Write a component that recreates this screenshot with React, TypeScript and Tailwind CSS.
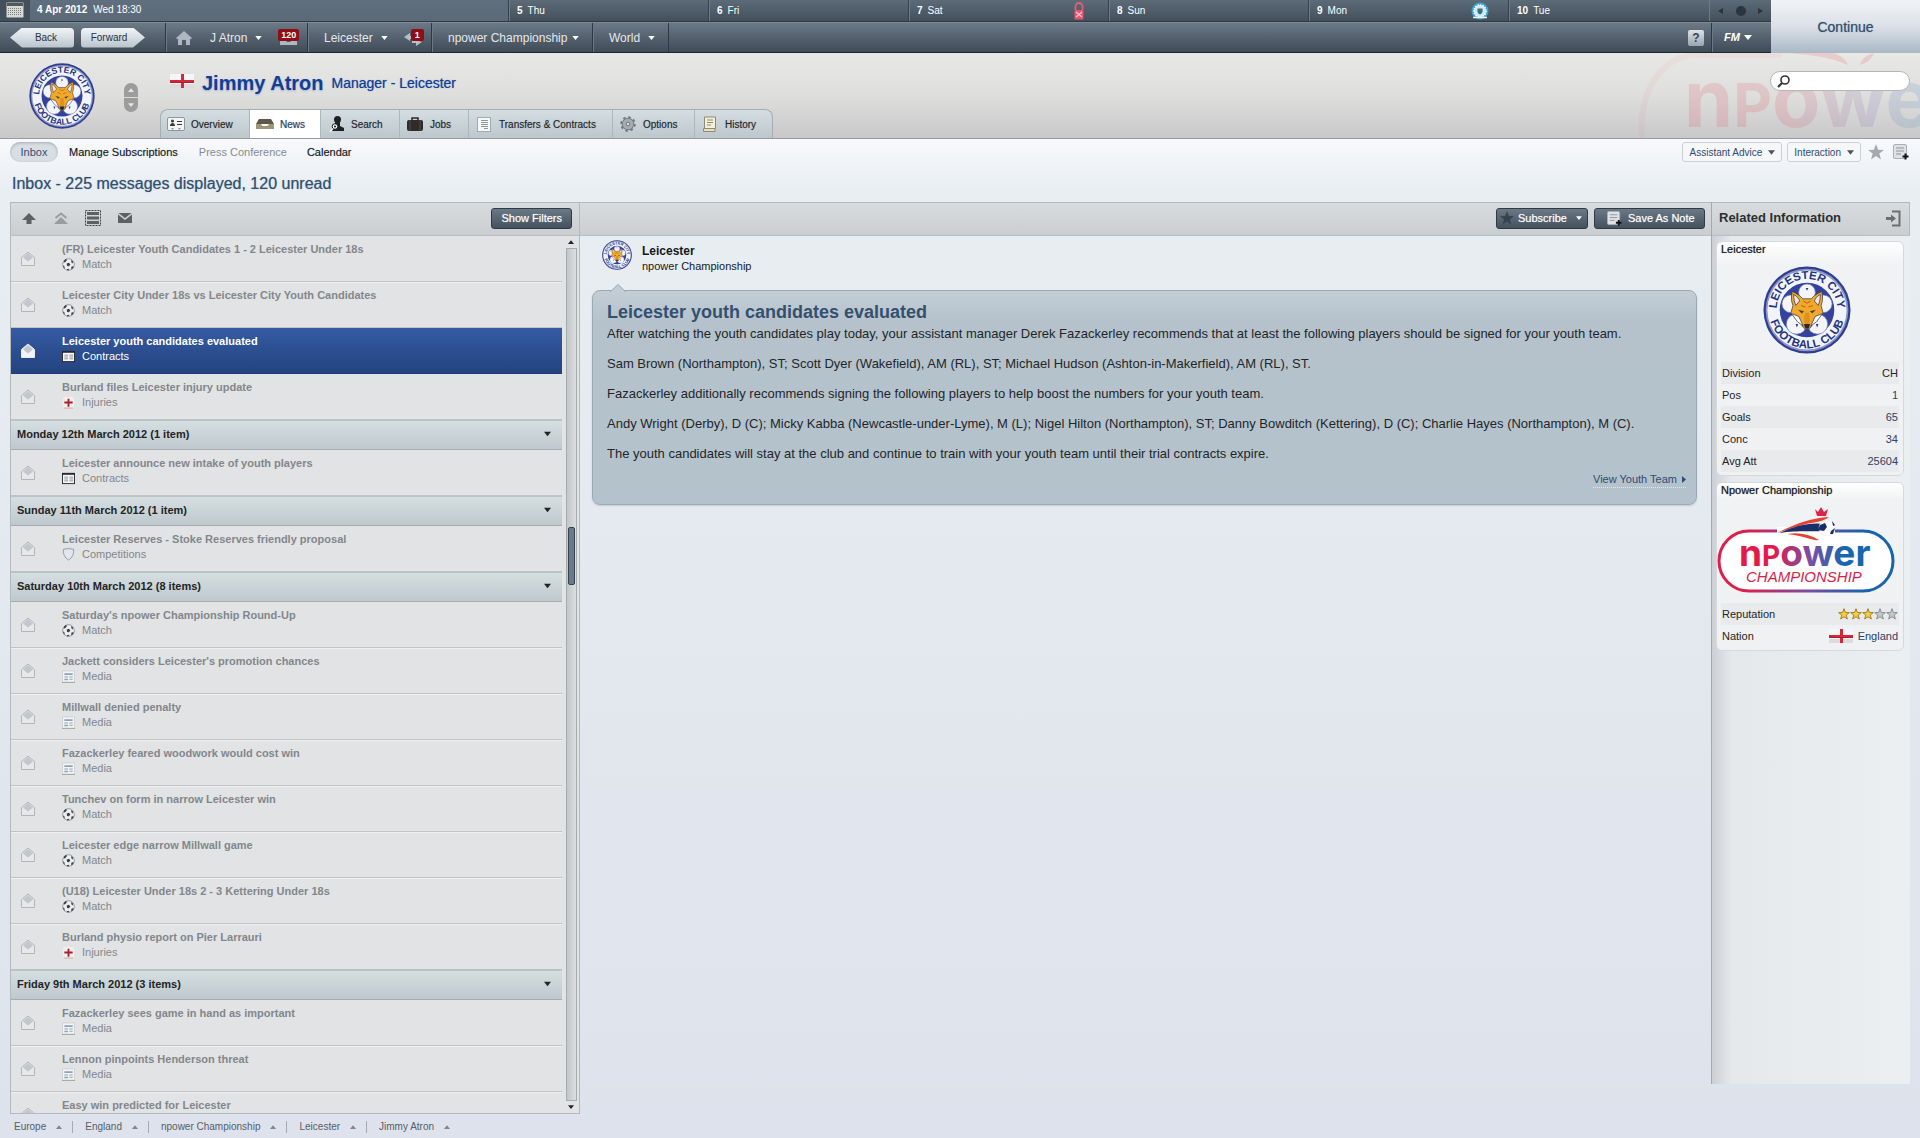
import React from "react";
import clsx from "clsx";

type Category = "Match" | "Contracts" | "Injuries" | "Competitions" | "Media";

interface Message {
  title: string;
  category: Category;
  selected?: boolean;
}

interface Group {
  heading?: string;
  messages: Message[];
}

const groups: Group[] = [
  {
    messages: [
      { title: "(FR) Leicester Youth Candidates 1 - 2 Leicester Under 18s", category: "Match" },
      { title: "Leicester City Under 18s vs Leicester City Youth Candidates", category: "Match" },
      { title: "Leicester youth candidates evaluated", category: "Contracts", selected: true },
      { title: "Burland files Leicester injury update", category: "Injuries" },
    ],
  },
  {
    heading: "Monday 12th March 2012 (1 item)",
    messages: [{ title: "Leicester announce new intake of youth players", category: "Contracts" }],
  },
  {
    heading: "Sunday 11th March 2012 (1 item)",
    messages: [{ title: "Leicester Reserves - Stoke Reserves friendly proposal", category: "Competitions" }],
  },
  {
    heading: "Saturday 10th March 2012 (8 items)",
    messages: [
      { title: "Saturday's npower Championship Round-Up", category: "Match" },
      { title: "Jackett considers Leicester's promotion chances", category: "Media" },
      { title: "Millwall denied penalty", category: "Media" },
      { title: "Fazackerley feared woodwork would cost win", category: "Media" },
      { title: "Tunchev on form in narrow Leicester win", category: "Match" },
      { title: "Leicester edge narrow Millwall game", category: "Match" },
      { title: "(U18) Leicester Under 18s 2 - 3 Kettering Under 18s", category: "Match" },
      { title: "Burland physio report on Pier Larrauri", category: "Injuries" },
    ],
  },
  {
    heading: "Friday 9th March 2012 (3 items)",
    messages: [
      { title: "Fazackerley sees game in hand as important", category: "Media" },
      { title: "Lennon pinpoints Henderson threat", category: "Media" },
      { title: "Easy win predicted for Leicester", category: "Media" },
    ],
  },
];

const body = [
  "After watching the youth candidates play today, your assistant manager Derek Fazackerley recommends that at least the following players should be signed for your youth team.",
  "Sam Brown (Northampton), ST; Scott Dyer (Wakefield), AM (RL), ST; Michael Hudson (Ashton-in-Makerfield), AM (RL), ST.",
  "Fazackerley additionally recommends signing the following players to help boost the numbers for your youth team.",
  "Andy Wright (Derby), D (C); Micky Kabba (Newcastle-under-Lyme), M (L); Nigel Hilton (Northampton), ST; Danny Bowditch (Kettering), D (C); Charlie Hayes (Northampton), M (C).",
  "The youth candidates will stay at the club and continue to train with your youth team until their trial contracts expire.",
];

const Caret = ({ className = "", up = false }: { className?: string; up?: boolean }) => (
  <svg className={clsx("shrink-0", className)} viewBox="0 0 8 5" fill="currentColor" aria-hidden="true">
    <path d={up ? "M0 5h8L4 0z" : "M0 0h8L4 5z"} />
  </svg>
);

const Crest = ({ id, className }: { id: string; className: string }) => (
  <svg className={className} viewBox="0 0 100 100" role="img" aria-label="Leicester City crest">
    <defs>
      <path id={`${id}-top`} d="M16 55A34.500 34.500 0 1 1 84 55" />
      <path id={`${id}-bottom`} d="M6.500 50A43.500 43.500 0 0 0 93.500 50" />
    </defs>
    <circle cx="50" cy="50" r="49.500" fill="#2f3d8f" />
    <circle cx="50" cy="50" r="47" fill="#8c95c8" />
    <circle cx="50" cy="50" r="45" fill="#f2f4fb" />
    <circle cx="50" cy="50" r="31" fill="#33429a" />
    <g fill="#f4f5fb" stroke="#7480ba" strokeWidth="0.8">
      <circle cx="50" cy="30" r="9.500" />
      <circle cx="31.500" cy="43" r="10" />
      <circle cx="68.500" cy="43" r="10" />
      <circle cx="38" cy="66" r="11.500" />
      <circle cx="62" cy="66" r="11.500" />
    </g>
    <path d="M37 66l3 0-1.500 4zM60 66l3 0-1.500 4zM48.500 25h3L50 28z" fill="#2b3a86" />
    <g transform="translate(8 7) scale(0.84)">
      <g stroke="#3a3550" strokeWidth="1" strokeLinejoin="round">
        <path d="M30 26c7 3 11 6 14 10h12c3-4 7-7 14-10 2 9 1 14-1 19l3 11-11 8-6 11-5 3-5-3-6-11-11-8 3-11c-2-5-3-10-1-19z" fill="#f0a92a" />
        <path d="M32 30c5 3 7 6 8 9l-5 6c-2-4-3-9-3-15zM68 30c-5 3-7 6-8 9l5 6c2-4 3-9 3-15z" fill="#efe7e0" />
        <path d="M29 56l10 4 6 13-8-6zM71 56l-10 4-6 13 8-6z" fill="#ffffff" />
      </g>
      <path d="M38 51l8 2-3 3zM62 51l-8 2 3 3z" fill="#4a4038" />
      <path d="M47 55l-1 12 4 8 4-8-1-12" fill="#e18f1e" />
      <path d="M46 70h8l-1 5-3 2-3-2z" fill="#26263a" />
      <path d="M45 39l5 3 5-3M42 45l6 2M58 45l-6 2" fill="none" stroke="#c26a1a" strokeWidth="1.500" />
    </g>
    <g fill="#26357f" fontFamily="Liberation Sans, Arial, sans-serif" fontWeight="700" fontSize="13">
      <text textAnchor="middle">
        <textPath href={`#${id}-top`} startOffset="50%">LEICESTER CITY</textPath>
      </text>
      <text textAnchor="middle">
        <textPath href={`#${id}-bottom`} startOffset="50%">FOOTBALL CLUB</textPath>
      </text>
    </g>
  </svg>
);

const Flag = ({ className }: { className: string }) => (
  <svg className={className} viewBox="0 0 24 14" role="img" aria-label="England">
    <rect width="24" height="14" fill="#f6f6f6" />
    <path d="M0 10h24v4H0z" fill="#dcdcdc" />
    <path d="M11 0h3v14h-3zM0 6h24v3H0z" fill="#d3273a" />
    <path d="M0 8h24v1H0z" fill="#b01c30" />
  </svg>
);

const NoteIcon = ({ className }: { className: string }) => (
  <svg className={className} viewBox="0 0 16 16" aria-hidden="true">
    <rect x="0.500" y="0.500" width="13" height="14" rx="1.500" fill="#dfe2e5" stroke="#a9afb5" />
    <path d="M3 4h8M3 7h8M3 10h5" stroke="#8d949b" />
    <path d="M12.500 9.500v6M9.500 12.500h6" stroke="#111" strokeWidth="2" />
  </svg>
);

const StarIcon = ({ className }: { className: string }) => (
  <svg className={className} viewBox="0 0 16 16" fill="currentColor" aria-hidden="true">
    <path d="M8 0l2.100 5.700 5.900.200-4.700 3.700L13 15.500 8 12.100 3 15.500l1.700-5.900L0 5.900l5.900-.2z" />
  </svg>
);

const Envelope = ({ selected }: { selected?: boolean }) => (
  <svg className="mt-[9px] h-4 w-4 shrink-0" viewBox="0 0 16 16" aria-hidden="true">
    <path d="M1.500 6.500L8 1l6.500 5.500v8h-13z" fill={selected ? "#f3f4f6" : "#e6e8ea"} stroke={selected ? "#e8eaf0" : "#b2b6ba"} />
    <path d="M3 6.500L8 2l5 4.500L8 10.500z" fill="#c3c6cc" />
  </svg>
);

const CategoryIcon = ({ category }: { category: Category }) => {
  switch (category) {
    case "Match":
      return (
        <svg className="h-[13px] w-[13px]" viewBox="0 0 14 14" aria-hidden="true">
          <circle cx="7" cy="7" r="6.300" fill="#eceef0" stroke="#8a8e92" strokeWidth="0.900" />
          <path d="M5 6l2.500-1L9 7 7.500 9 5.500 8.500zM2 3l2-2 1.500 1L4 4 2 5zM10 2l2 2-.5 2L10 4.500zM1 8l1.500.5.500 3L2 11zM10 9.500l2.500-1-.500 2.500-2 1.500zM5 12l2-.500 1 1.500-2 .5z" fill="#3c4044" />
        </svg>
      );
    case "Contracts":
      return (
        <svg className="h-[13px] w-[13px]" viewBox="0 0 14 14" aria-hidden="true">
          <rect x="0.500" y="1.500" width="13" height="11" fill="#f7f7f7" stroke="#26292c" />
          <path d="M0 1h14v2H0z" fill="#26292c" />
          <path d="M2.500 5.500h4M2.500 7.500h4M2.500 9.500h4M8 5.500h4M8 7.500h4M8 9.500h4" stroke="#8b8f93" />
        </svg>
      );
    case "Injuries":
      return (
        <svg className="h-[13px] w-[13px]" viewBox="0 0 14 14" aria-hidden="true">
          <rect x="1" y="1" width="12" height="12" rx="2" fill="#f0efed" />
          <path d="M2 13h10" stroke="#c9a9a0" />
          <path d="M7 3v8.500M2.500 7h9" stroke="#a8202c" strokeWidth="2" />
        </svg>
      );
    case "Competitions":
      return (
        <svg className="h-[13px] w-[13px]" viewBox="0 0 14 14" aria-hidden="true">
          <path d="M1.500 1.500c4-1 7-1 11 0 .5 5-1.500 9-5.500 11.500C3 10.500 1 6.500 1.500 1.500z" fill="#e3e6ee" stroke="#8f959f" />
        </svg>
      );
    case "Media":
      return (
        <svg className="h-[13px] w-[13px]" viewBox="0 0 14 14" aria-hidden="true">
          <rect x="0.500" y="1" width="13" height="12" fill="#f2f4f6" stroke="#ced1d4" />
          <path d="M0 13.500h14" stroke="#a5a49a" />
          <path d="M2.500 3.500h9v2h-9zM2.500 7h4v1h-4zM8 7h3.500v1H8zM2.500 9.500h4v1.500h-4zM8 9.500h3.500v1H8z" fill="#8fa3b8" />
        </svg>
      );
  }
};

const days = [
  { day: "5", name: "Thu" },
  { day: "6", name: "Fri" },
  { day: "7", name: "Sat", icon: "npower" },
  { day: "8", name: "Sun" },
  { day: "9", name: "Mon", icon: "crest" },
  { day: "10", name: "Tue" },
];

const DateBar = () => (
  <div className="flex h-[22px] border-b border-[#2f3942] bg-linear-to-b from-[#5d6b79] to-[#43505c] text-[10px] text-white">
    <div className="flex w-[509px] shrink-0 items-center bg-linear-to-b from-[#5f6f7e] to-[#5c6977] pb-[2px]">
      <button className="flex h-[22px] w-[30px] items-center justify-center bg-[#42505e]" aria-label="Calendar">
        <svg className="h-4 w-[18px]" viewBox="0 0 18 16" aria-hidden="true">
          <rect x="0.500" y="0.500" width="17" height="15" rx="1" fill="#d8d8d4" stroke="#8d9090" />
          <path d="M1 1h16v3H1z" fill="#55585b" />
          <path d="M2 6.500h14M2 8.500h14M2 10.500h14M2 12.500h14" stroke="#7d8083" strokeDasharray="1 1" />
        </svg>
      </button>
      <span className="ml-[7px] font-bold">4 Apr 2012</span>
      <span className="ml-[6px]">Wed 18:30</span>
    </div>
    {days.map((d) => (
      <div key={d.day} className="flex flex-1 items-center border-l border-[#6f7b87] pl-[7px] shadow-[-1px_0_0_#35404a]">
        <span className="font-bold">{d.day}</span>
        <span className="ml-[5px]">{d.name}</span>
        {d.icon === "npower" && (
          <svg className="mr-6 ml-auto h-[18px] w-3" viewBox="0 0 12 18" aria-hidden="true">
            <path d="M2.500 8V4.500a3.500 3.500 0 0 1 7 0V8" fill="none" stroke="#e0607a" strokeWidth="1.800" />
            <rect x="1.500" y="8" width="9" height="9.500" rx="1" fill="#e8546c" />
            <path d="M3 10l6 5M9 10l-6 5" stroke="#f7c3cc" strokeWidth="1.300" />
          </svg>
        )}
        {d.icon === "crest" && (
          <svg className="mr-5 ml-auto h-[18px] w-[18px]" viewBox="0 0 18 18" aria-hidden="true">
            <circle cx="9" cy="9" r="8.500" fill="#3fa3d6" />
            <circle cx="9" cy="9" r="6" fill="#cfeaf7" stroke="#fff" strokeWidth="1.500" strokeDasharray="1.500 1" />
            <path d="M6.500 6.500h5v3c0 1.500-1.500 2.500-2.500 3-1-.5-2.500-1.500-2.500-3z" fill="#3e6f80" />
            <path d="M2 15.500h14" stroke="#e8f5fb" strokeWidth="1.500" />
          </svg>
        )}
      </div>
    ))}
    <div className="flex w-[62px] shrink-0 items-center justify-between border-l border-[#6f7b87] px-2 text-[#2c353d]">
      <button aria-label="Previous day">
        <svg className="h-[6px] w-[5px]" viewBox="0 0 5 6" fill="currentColor"><path d="M5 0v6L0 3z" /></svg>
      </button>
      <span className="h-[10px] w-[10px] rounded-full bg-[#2c353d]" />
      <button aria-label="Next day">
        <svg className="h-[6px] w-[5px]" viewBox="0 0 5 6" fill="currentColor"><path d="M0 0v6l5-3z" /></svg>
      </button>
    </div>
  </div>
);

const navCell = "flex h-full items-center border-l border-[#2e3842] shadow-[inset_1px_0_0_#6b7885]";

const NavBar = () => (
  <div className="flex h-[31px] items-center border-t border-b border-t-[#7d8a96] border-b-[#1f272e] bg-linear-to-b from-[#6c7986] to-[#3f4b57] text-xs text-[#e4e8ec] [text-shadow:0_1px_1px_#2a333b]">
    <div className="flex w-[165px] shrink-0 gap-[7px] pl-[10px] text-[10px] text-[#2b333b] [text-shadow:0_0_1px_#7d868e]">
      <button className="h-5 w-16 rounded-r bg-linear-to-b from-[#f2f5f7] to-[#b9c3cc] pl-2 [clip-path:polygon(0_50%,12px_0,100%_0,100%_100%,12px_100%)]">Back</button>
      <button className="h-5 w-16 rounded-l bg-linear-to-b from-[#f2f5f7] to-[#b9c3cc] pr-2 [clip-path:polygon(0_0,52px_0,100%_50%,52px_100%,0_100%)]">Forward</button>
    </div>
    <div className={clsx(navCell, "w-[142px]")}>
      <button className="ml-[10px]" aria-label="Home">
        <svg className="h-[14px] w-4" viewBox="0 0 16 14" fill="#aeb7bf" aria-hidden="true">
          <path d="M8 0l8 7-1 1.200-1-.8V14h-4V9H6v5H2V7.400l-1 .8L0 7z" />
        </svg>
      </button>
      <button className="ml-[18px] flex items-center gap-[8px]">
        J Atron
        <Caret className="h-1 w-[7px] text-white" />
      </button>
      <button className="ml-4 flex h-[18px] w-[21px] flex-col items-center" aria-label="120 unread messages">
        <span className="z-10 h-3 w-full rounded-[2px] bg-[#8f0d16] text-center text-[9px] leading-3 font-bold text-white [text-shadow:none]">120</span>
        <svg className="-mt-px h-[5px] w-[17px]" viewBox="0 0 17 5" aria-hidden="true">
          <path d="M0 0h5l2 2h3l2-2h5v5H0z" fill="#aeb7bf" />
        </svg>
      </button>
    </div>
    <div className={clsx(navCell, "w-[124px]")}>
      <button className="ml-4 flex items-center gap-[8px]">
        Leicester
        <Caret className="h-1 w-[7px] text-white" />
      </button>
      <button className="relative ml-4 h-[18px] w-5" aria-label="1 transfer notice">
        <svg className="h-[18px] w-5" viewBox="0 0 20 18" fill="#b6bfc7" aria-hidden="true">
          <path d="M0 8l6-4v3h5v3H6v2zM18 13l-6 4v-3H8v-3h4z" />
        </svg>
        <span className="absolute top-0 right-0 h-3 w-[13px] rounded-[2px] bg-[#8f0d16] text-center text-[9px] leading-3 font-bold text-white [text-shadow:none]">1</span>
      </button>
    </div>
    <button className={clsx(navCell, "w-[161px] gap-[5px] pl-4")}>
      npower Championship
      <Caret className="h-1 w-[7px] text-white" />
    </button>
    <button className={clsx(navCell, "w-[76px] gap-[8px] pl-4")}>
      World
      <Caret className="h-1 w-[7px] text-white" />
    </button>
    <div className={navCell} />
    <button className="mr-[7px] ml-auto h-4 w-4 rounded-[2px] bg-linear-to-b from-[#dfe3e7] to-[#98a4af] text-center text-xs leading-4 font-bold text-[#39444f] [text-shadow:none]" aria-label="Help">?</button>
    <button className={clsx(navCell, "w-[60px] gap-1 pl-3 text-[11px] font-bold text-white italic")}>
      FM
      <Caret className="h-[5px] w-2 text-white" />
    </button>
  </div>
);

/* crown and ball trail drawn above the sponsor name */
const Swoosh = () => (
  <g>
    <path d="M60 26C80 16 95 11 112 10c-4 3-8 4-12 5-14 2-26 6-40 11z" fill="#e8412f" />
    <path d="M62 26c16-7 30-11 46-9 4 2 5 4 2 7-14 1-26-1-48 2z" fill="#1a2f68" />
    <path d="M70 27c12-2 22 0 32 6-6 1-14-4-32-6z" fill="#e8412f" />
    <circle cx="110" cy="21" r="8" fill="#fdfdfe" stroke="#dfe3ea" strokeWidth="0.500" />
    <path d="M103 18l5-2 2 4-3 4-6-1zM115 14l3 4-2 1zM114 24l4-3-2 6-3 0z" fill="#1a2f68" />
    <path d="M98 2l3 3 3-5 3 5 4-3-2 7h-9z" fill="#dc2348" />
  </g>
);

const NpowerLogo = () => (
  <svg className="h-[88px] w-[178px]" viewBox="0 0 178 88" role="img" aria-label="npower Championship">
    <defs>
      <linearGradient id="np-ring" x1="0" x2="1">
        <stop offset="0.150" stopColor="#dc1f4b" />
        <stop offset="0.500" stopColor="#7b4aa0" />
        <stop offset="0.850" stopColor="#1763ae" />
      </linearGradient>
      <linearGradient id="np-name" gradientUnits="userSpaceOnUse" x1="22" x2="154" y1="0" y2="0">
        <stop offset="0.250" stopColor="#e41b48" />
        <stop offset="0.550" stopColor="#7550a8" />
        <stop offset="0.800" stopColor="#1767b0" />
      </linearGradient>
    </defs>
    <rect x="2" y="24" width="174" height="60" rx="30" fill="#fff" stroke="url(#np-ring)" strokeWidth="3" />
    <path d="M60 20h58v10H60z" fill="#fff" />
    <Swoosh />
    <text x="22" y="59" fill="url(#np-name)" fontFamily="Inter, sans-serif" fontWeight="700" fontSize="37">
      n<tspan fontSize="28">P</tspan>ower
    </text>
    <text x="29" y="75" fill="#d81f49" fontFamily="Liberation Sans, Arial, sans-serif" fontStyle="italic" fontSize="15">
      CHAMPIONSHIP
    </text>
  </svg>
);

const Watermark = () => (
  <svg className="absolute top-0 right-0 h-[86px] w-[290px] opacity-15" viewBox="0 0 290 86" aria-hidden="true">
    <defs>
      <linearGradient id="wm" gradientUnits="userSpaceOnUse" x1="50" x2="290" y1="0" y2="0">
        <stop offset="0.400" stopColor="#e8364a" />
        <stop offset="0.780" stopColor="#7a6bb0" />
        <stop offset="1" stopColor="#3a83c0" />
      </linearGradient>
    </defs>
    <path d="M12 86C8 40 30 6 62 2h90" fill="none" stroke="#e8364a" strokeWidth="6" opacity="0.300" />
    <path d="M150 0h54c8 3 12 7 14 12-16-7-36-11-68-12zM230 12c2-6 6-10 14-12-2 5-6 10-14 12z" fill="#e83a35" />
    <text x="54" y="74" fill="url(#wm)" fontFamily="Inter, sans-serif" fontWeight="700" fontSize="79">
      n<tspan fontSize="60">P</tspan>ower
    </text>
  </svg>
);

const tabs = [
  {
    label: "Overview",
    width: "w-[88px]",
    icon: (
      <svg className="h-4 w-[18px]" viewBox="0 0 18 16">
        <rect x="0.500" y="1.500" width="17" height="13" rx="1.500" fill="#f3f4f4" stroke="#8f979c" />
        <circle cx="5.500" cy="5" r="1.500" fill="#33383c" />
        <path d="M3 10c0-4 5-4 5 0zM10 5h5v1h-5zM10 8h5v1h-5z" fill="#33383c" />
        <path d="M4 12h3l-1.500 2zM11 12h3l-1.500 2z" fill="#8f979c" />
      </svg>
    ),
  },
  {
    label: "News",
    width: "w-[71px]",
    active: true,
    icon: (
      <svg className="h-[10px] w-[18px]" viewBox="0 0 18 10">
        <path d="M3 0h12l3 5H0z" fill="#5f5748" />
        <path d="M0 5h5l1.500 2h5L13 5h5v5H0z" fill="#a09478" />
      </svg>
    ),
  },
  {
    label: "Search",
    width: "w-[79px]",
    icon: (
      <svg className="h-4 w-[15px]" viewBox="0 0 15 16">
        <circle cx="8.500" cy="3.500" r="3.500" fill="#1e2123" />
        <path d="M6 6h5v4l4 2v3H3v-4l3-1z" fill="#1e2123" />
        <circle cx="6" cy="10.500" r="2.800" fill="#eef0f1" stroke="#1e2123" />
        <circle cx="6" cy="10.500" r="1" fill="#1e2123" />
        <path d="M4 12.500L1 16" stroke="#f4f4f4" strokeWidth="1.500" />
      </svg>
    ),
  },
  {
    label: "Jobs",
    width: "w-[69px]",
    icon: (
      <svg className="h-[14px] w-4" viewBox="0 0 16 14">
        <path d="M5 3V1h6v2" fill="none" stroke="#2a2725" strokeWidth="1.500" />
        <rect y="3" width="16" height="11" rx="2" fill="#2f2b29" />
        <path d="M3 3v11M13 3v11" stroke="#524c48" />
      </svg>
    ),
  },
  {
    label: "Transfers & Contracts",
    width: "w-[144px]",
    icon: (
      <svg className="h-[15px] w-[14px]" viewBox="0 0 14 15">
        <rect x="0.500" y="0.500" width="13" height="14" fill="#f5f6f6" stroke="#a2abb0" />
        <path d="M4 3.500h7M4 5.500h7M4 7.500h7M4 9.500h7M7 11.500h4" stroke="#8f979c" />
      </svg>
    ),
  },
  {
    label: "Options",
    width: "w-[82px]",
    icon: (
      <svg className="h-4 w-4" viewBox="0 0 16 16">
        <circle cx="8" cy="8" r="6.800" fill="none" stroke="#737c82" strokeWidth="2" strokeDasharray="2.700 2.640" />
        <circle cx="8" cy="8" r="5.800" fill="#a4acb1" stroke="#737c82" />
        <circle cx="8" cy="8" r="1.800" fill="#d4dadd" stroke="#737c82" />
      </svg>
    ),
  },
  {
    label: "History",
    width: "w-[78px]",
    icon: (
      <svg className="h-4 w-[14px]" viewBox="0 0 14 16">
        <path d="M1.500 1h11v11.500h-11z" fill="#f3efdc" stroke="#8f8b73" />
        <path d="M0.500 12.500h11.500v3H0.500z" fill="#e4dfc4" stroke="#8f8b73" />
        <path d="M4 4h6M4 6.500h6M4 9h4" stroke="#8f8b73" />
      </svg>
    ),
  },
];

const Header = () => (
  <header className="relative flex h-[86px] overflow-hidden border-b border-[#989a9b] bg-linear-to-b from-[#e8e8e6] via-[#dededd] to-[#c9c9c9]">
    <Watermark />
    <Crest id="crest-head" className="mt-[10px] ml-[29px] h-[66px] w-[66px]" />
    <div className="mt-[30px] ml-[29px] flex w-[14px] flex-col gap-px">
      <button className="flex h-[14px] items-center justify-center rounded-t-full bg-[#9c9c9c] text-[#e6e6e6]" aria-label="Previous">
        <Caret up className="h-1 w-[6px]" />
      </button>
      <button className="flex h-[14px] items-center justify-center rounded-b-full bg-[#9c9c9c] text-[#e6e6e6]" aria-label="Next">
        <Caret className="h-1 w-[6px]" />
      </button>
    </div>
    <div className="ml-[22px] flex flex-col justify-between">
      <div className="mt-4 ml-[10px] flex items-center text-[#123e94]">
        <Flag className="-mt-1 h-[14px] w-6" />
        <h1 className="ml-2 text-xl leading-7 font-bold [text-shadow:0_1px_2px_#9fb0d0]">Jimmy Atron</h1>
        <span className="ml-2 text-sm [text-shadow:0_0_1px_#5c7bb8]">Manager - Leicester</span>
      </div>
      <nav className="flex h-[29px] overflow-hidden rounded-t-lg border-t border-r border-l border-[#a5afb3] bg-linear-to-b from-[#d5dee1] to-[#bcc7cd] text-[10px] text-[#1f2529]">
        {tabs.map((tab, i) => (
          <a
            key={tab.label}
            href="#"
            className={clsx(
              "flex items-center whitespace-nowrap pl-1 [text-shadow:0_0_1px_#8a9296]",
              tab.width,
              i > 0 && "border-l border-[#aeb8bc]",
              tab.active && "bg-white text-[#2c4871]",
            )}
          >
            <span className="flex w-[22px] shrink-0 justify-center">{tab.icon}</span>
            <span className="ml-1">{tab.label}</span>
          </a>
        ))}
      </nav>
    </div>
    <label className="absolute top-[18px] right-[10px] flex h-5 w-[140px] items-center rounded-full border border-[#b6b6b6] bg-white pl-[6px]">
      <svg className="h-[13px] w-[13px]" viewBox="0 0 13 13" fill="none" stroke="#333" aria-hidden="true">
        <circle cx="8" cy="5" r="4" strokeWidth="1.600" />
        <path d="M5 8L1 12" strokeWidth="2.200" />
      </svg>
      <input type="search" aria-label="Search" className="w-[110px] bg-transparent px-1 text-[11px] outline-none" />
    </label>
  </header>
);

const SubNav = () => (
  <div className="flex h-7 items-center pr-[11px] pb-[2px] pl-[10px] text-[11px] text-[#171b1e]">
    <a href="#" className="flex h-5 w-[48px] items-center justify-center rounded-full bg-[#d9dee2] text-[#33507a] shadow-[inset_0_1px_3px_#a4acb2]">Inbox</a>
    <a href="#" className="ml-[11px] [text-shadow:0_0_1px_#a8acaf]">Manage Subscriptions</a>
    <a href="#" className="ml-[21px] text-[#878c91]">Press Conference</a>
    <a href="#" className="ml-5 [text-shadow:0_0_1px_#a8acaf]">Calendar</a>
    <div className="ml-auto flex items-center text-[10px] text-[#2f4b73] [text-shadow:0_0_1px_#a3b0c2]">
      <button className="flex h-5 items-center gap-[6px] rounded-[3px] border border-[#cbd0d4] bg-[#f6f7f9] px-[6px]">
        Assistant Advice
        <Caret className="h-[5px] w-[7px] text-[#4d545a]" />
      </button>
      <button className="ml-[5px] flex h-5 items-center gap-[6px] rounded-[3px] border border-[#cbd0d4] bg-[#f6f7f9] px-[6px]">
        Interaction
        <Caret className="h-[5px] w-[7px] text-[#4d545a]" />
      </button>
      <button className="ml-[7px] text-[#a5aaae]" aria-label="Bookmark">
        <StarIcon className="h-4 w-4" />
      </button>
      <button className="ml-[9px]" aria-label="Add note">
        <NoteIcon className="h-4 w-4" />
      </button>
    </div>
  </div>
);

const darkButton =
  "flex h-[21px] items-center rounded-[3px] border border-[#2f3a46] bg-linear-to-b from-[#6b7987] to-[#44515f] text-[11px] text-white [text-shadow:0_0_1px_#b8c0c8]";

const toolbar =
  "flex h-[34px] shrink-0 items-center border-t border-b border-t-[#b3b9bd] border-b-[#b9bec2] bg-linear-to-b from-[#d8dcde] to-[#cbced0] pb-[2px]";

const MessageRow = ({ title, category, selected }: Message) => (
  <li>
    <button
      className={clsx(
        "flex h-[46px] w-full items-start border-b pt-[6px] pl-[9px] text-left text-[11px] leading-[15px]",
        selected
          ? "border-[#1f3a75] bg-linear-to-b from-[#355ba3] to-[#24437f] text-white"
          : "border-[#bfc3c5] text-[#83878b] shadow-[0_1px_0_#eef0f1]",
      )}
    >
      <Envelope selected={selected} />
      <span className="ml-[26px]">
        <span className="block font-bold">{title}</span>
        <span className="flex items-center gap-[7px]">
          <CategoryIcon category={category} />
          {category}
        </span>
      </span>
    </button>
  </li>
);

const MessageList = () => (
  <section className="flex w-[570px] shrink-0 flex-col border-r border-b border-l border-[#b3b9bd] bg-[#e1e3e5]">
    <div className={clsx(toolbar, "pr-[7px] pl-[11px] text-[#5d6164]")}>
      <button aria-label="Up">
        <svg className="h-[11px] w-[14px]" viewBox="0 0 14 11" fill="currentColor"><path d="M7 0l7 7H9.500v4h-5V7H0z" /></svg>
      </button>
      <button className="ml-[18px] text-[#999d9f]" aria-label="Top">
        <svg className="h-3 w-[14px]" viewBox="0 0 14 12">
          <path d="M1.500 6L7 1.500 12.500 6" fill="none" stroke="currentColor" strokeWidth="2" />
          <path d="M7 5l7 7H0z" fill="currentColor" />
        </svg>
      </button>
      <button className="ml-[17px]" aria-label="Select all">
        <svg className="h-4 w-4" viewBox="0 0 16 16">
          <rect x="0.500" y="0.500" width="15" height="15" fill="none" stroke="#3f4346" strokeDasharray="2 1" />
          <path d="M2 2h12v3H2zM2 6.500h12v3H2zM2 11h12v3H2z" fill="#5d6164" />
        </svg>
      </button>
      <button className="ml-[17px]" aria-label="Mark as read">
        <svg className="h-[10px] w-[14px]" viewBox="0 0 14 10">
          <path d="M0 0h14v10H0z" fill="#5d6164" />
          <path d="M0 0.500l7 5.500 7-5.500" fill="none" stroke="#d3d6d8" strokeWidth="1.400" />
        </svg>
      </button>
      <button className={clsx(darkButton, "ml-auto px-[9px]")}>Show Filters</button>
    </div>
    <div className="flex min-h-0 flex-1">
      <div className="min-w-0 flex-1 overflow-hidden">
        {groups.map((group) => (
          <div key={group.heading ?? "first"}>
            {group.heading && (
              <button className="flex h-[30px] w-full items-center justify-between border-t border-b border-t-[#b9c3c6] border-b-[#a4acb0] bg-linear-to-b from-[#d5dfe1] to-[#bfc8cc] pr-[11px] pb-[2px] pl-[6px] text-[11px] font-bold text-[#1f2426]">
                {group.heading}
                <Caret className="h-[6px] w-[7px]" />
              </button>
            )}
            <ul>
              {group.messages.map((message) => (
                <MessageRow key={message.title} {...message} />
              ))}
            </ul>
          </div>
        ))}
      </div>
      <div className="flex w-[17px] shrink-0 flex-col items-center pl-px text-[#1f2426]">
        <button className="flex h-3 items-center" aria-label="Scroll up">
          <Caret up className="h-1 w-[6px]" />
        </button>
        <div className="flex w-[11px] flex-1 flex-col items-center border border-[#a6abae] bg-linear-to-r from-[#c3c6c9] to-[#dcdee0]">
          <div className="flex-[277]" />
          <div className="h-[58px] w-[7px] rounded-[2px] border border-[#36424e] bg-[#6b7a8a]" />
          <div className="flex-[514]" />
        </div>
        <button className="flex h-3 items-center" aria-label="Scroll down">
          <Caret className="h-1 w-[6px]" />
        </button>
      </div>
    </div>
  </section>
);

const MessageView = () => (
  <section className="flex min-w-0 flex-1 flex-col">
    <div className={clsx(toolbar, "justify-end gap-[6px] pr-[6px]")}>
      <button className={clsx(darkButton, "w-[92px] pl-[3px]")}>
        <StarIcon className="h-[14px] w-[14px] text-[#36424e]" />
        <span className="ml-1">Subscribe</span>
        <Caret className="ml-[9px] h-1 w-[6px]" />
      </button>
      <button className={clsx(darkButton, "w-[111px] pl-3")}>
        <NoteIcon className="h-[15px] w-[15px]" />
        <span className="ml-[6px]">Save As Note</span>
      </button>
    </div>
    <div className="flex h-[54px] items-start pt-1 pl-[22px] text-[#16191b]">
      <Crest id="crest-sender" className="h-[30px] w-[30px]" />
      <div className="mt-1 ml-[10px]">
        <div className="text-xs leading-[15px] font-bold">Leicester</div>
        <div className="text-[11px] leading-[15px]">npower Championship</div>
      </div>
    </div>
    <article className="relative mr-[14px] ml-3 rounded-lg border border-[#9aaab5] bg-linear-to-b from-[#c3cdd6] via-[#b5c2cb] via-15% to-[#b4c2cb] px-[14px] pt-[9px] shadow-[0_1px_2px_#c3ccd3]">
      <svg className="absolute -top-[7px] left-[17px] h-2 w-4" viewBox="0 0 16 8" aria-hidden="true">
        <path d="M0 8l8-7.500L16 8" fill="#c3cdd6" stroke="#9aaab5" />
      </svg>
      <h2 className="text-lg leading-6 font-bold text-[#34506f]">Leicester youth candidates evaluated</h2>
      <div className="mt-[2px] flex flex-col gap-[15px] text-[13px] leading-[15px] text-[#1e2629]">
        {body.map((line) => (
          <p key={line}>{line}</p>
        ))}
      </div>
      <div className="-mr-1 flex justify-end pt-[11px] pb-4">
        <a href="#" className="flex items-center gap-[5px] border-b border-dotted border-[#e0e8ee] text-[11px] leading-[15px] text-[#2f4b73]">
          View Youth Team
          <svg className="h-[7px] w-1" viewBox="0 0 4 7" fill="currentColor"><path d="M0 0v7l4-3.500z" /></svg>
        </a>
      </div>
    </article>
  </section>
);

const Stat = ({ label, shaded, children }: { label: string; shaded?: boolean; children: React.ReactNode }) => (
  <tr className={clsx("h-[22px]", shaded && "bg-[#e8eaeb]")}>
    <th className="pl-px text-left font-normal text-[#1f2426]">{label}</th>
    <td className="pr-px text-right text-[#2f4168]">{children}</td>
  </tr>
);

const Card = ({ title, children }: { title: string; children: React.ReactNode }) => (
  <div className="rounded-md border border-[#d6d9dc] bg-linear-to-b from-white via-[#f1f2f3] via-10% to-[#f0f1f2] px-1 pb-[3px] text-[11px]">
    <h3 className="leading-[15px] text-[#16191b] [text-shadow:0_0_1px_#6a7074]">{title}</h3>
    {children}
  </div>
);

const RelatedInfo = () => (
  <aside className="mb-[30px] flex w-[199px] shrink-0 flex-col border-l border-[#a3a9af] bg-linear-to-r from-[#ccd0d5] via-[#e6e9ec] via-10% to-[#eceff2]">
    <div className={clsx(toolbar, "justify-between border-r border-r-[#b3b9bd] pr-2 pl-[7px]")}>
      <h2 className="text-[13px] font-bold text-[#2b2f31]">Related Information</h2>
      <button aria-label="Collapse panel">
        <svg className="h-[17px] w-[15px]" viewBox="0 0 15 17" fill="none" stroke="#6b6f72" aria-hidden="true">
          <path d="M6 1.500h7.500v14H6" strokeWidth="2" />
          <path d="M0 8.500h6" strokeWidth="3" />
          <path d="M5 4.500v8l5-4z" fill="#6b6f72" stroke="none" />
        </svg>
      </button>
    </div>
    <div className="flex flex-col gap-[6px] pt-[5px] pr-[6px] pl-1">
      <Card title="Leicester">
        <div className="flex justify-center pt-[9px] pr-[6px] pb-2">
          <Crest id="crest-info" className="h-[88px] w-[88px]" />
        </div>
        <table className="w-full">
          <tbody>
            <Stat label="Division" shaded><span className="text-[#1f2426]">CH</span></Stat>
            <Stat label="Pos">1</Stat>
            <Stat label="Goals" shaded>65</Stat>
            <Stat label="Conc">34</Stat>
            <Stat label="Avg Att" shaded>25604</Stat>
          </tbody>
        </table>
      </Card>
      <Card title="Npower Championship">
        <div className="-ml-1 flex pt-[9px] pb-2">
          <NpowerLogo />
        </div>
        <table className="w-full">
          <tbody>
            <Stat label="Reputation" shaded>
              <span className="flex justify-end" role="img" aria-label="3 out of 5 stars">
                {[1, 2, 3, 4, 5].map((n) => (
                  <svg key={n} className="h-3 w-3" viewBox="-1 -1 18 18" aria-hidden="true">
                    <path
                      d="M8 0l2.100 5.700 5.900.200-4.700 3.700L13 15.500 8 12.100 3 15.500l1.700-5.900L0 5.900l5.900-.2z"
                      fill={n <= 3 ? "#f5cf3a" : "#c4c7c9"}
                      stroke={n <= 3 ? "#a5822a" : "#8c9093"}
                      strokeWidth="1.500"
                    />
                  </svg>
                ))}
              </span>
            </Stat>
            <Stat label="Nation">
              <span className="flex items-center justify-end gap-[5px]">
                <Flag className="h-[14px] w-6" />
                England
              </span>
            </Stat>
          </tbody>
        </table>
      </Card>
    </div>
  </aside>
);

const crumbs = ["Europe", "England", "npower Championship", "Leicester", "Jimmy Atron"];

const Footer = () => (
  <footer className="flex h-6 shrink-0 items-center pt-px pl-[2px] text-[10px] text-[#565e66]">
    {crumbs.map((crumb, i) => (
      <a key={crumb} href="#" className={clsx("flex h-3 items-center gap-[10px] pr-[10px] pl-3", i > 0 && "border-l border-[#a3aab2]")}>
        {crumb}
        <Caret up className="h-1 w-[6px] text-[#80878e]" />
      </a>
    ))}
  </footer>
);

export default function App() {
  return (
    <div className="flex h-screen flex-col overflow-hidden bg-[#e3e8ee] font-['Liberation_Sans',Arial,sans-serif]">
      <div className="flex">
        <div className="min-w-0 flex-1">
          <DateBar />
          <NavBar />
        </div>
        <button className="w-[149px] bg-linear-to-b from-[#f1f3f6] via-[#dce1e8] to-[#a9b8c7] text-sm text-[#34506f] [text-shadow:0_0_1px_#6c8098]">
          Continue
        </button>
      </div>
      <Header />
      <main className="flex min-h-0 flex-1 flex-col bg-linear-to-b from-[#f8f9fc] via-[#e9eef2] via-5% to-[#dde2ec]">
        <SubNav />
        <h2 className="h-[35px] pt-[5px] pl-3 text-base leading-6 text-[#34506f] [text-shadow:0_0_1px_#7d90a8]">
          Inbox - 225 messages displayed, 120 unread
        </h2>
        <div className="flex min-h-0 flex-1 pr-[10px] pl-[10px]">
          <MessageList />
          <MessageView />
          <RelatedInfo />
        </div>
        <Footer />
      </main>
    </div>
  );
}
